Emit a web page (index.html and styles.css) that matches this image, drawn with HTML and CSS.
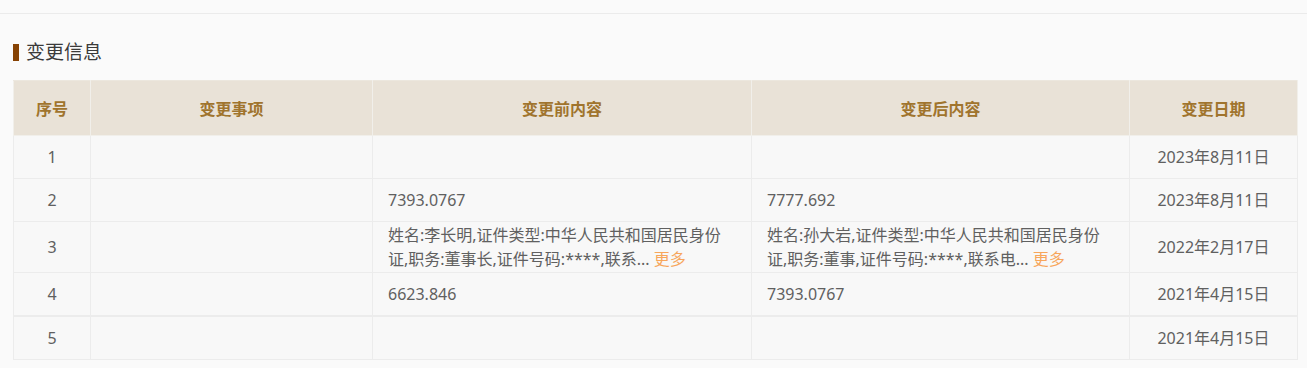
FILE: index.html
```html
<!DOCTYPE html>
<html lang="zh-CN">
<head>
<meta charset="utf-8">
<title>变更信息</title>
<link rel="stylesheet" href="styles.css">
</head>
<body>
<div class="topbar"></div>
<section class="panel">
  <h2 class="title"><span class="mark"></span>变更信息</h2>
  <table class="grid">
    <colgroup>
      <col class="c1"><col class="c2"><col class="c3"><col class="c4"><col class="c5">
    </colgroup>
    <thead>
      <tr><th>序号</th><th>变更事项</th><th>变更前内容</th><th>变更后内容</th><th>变更日期</th></tr>
    </thead>
    <tbody>
      <tr><td class="ctr">1</td><td></td><td></td><td></td><td class="ctr">2023年8月11日</td></tr>
      <tr><td class="ctr">2</td><td></td><td>7393.0767</td><td>7777.692</td><td class="ctr">2023年8月11日</td></tr>
      <tr class="tall"><td class="ctr">3</td><td></td><td>姓名:李长明,证件类型:中华人民共和国居民身份证,职务:董事长,证件号码:****,联系...&nbsp;<a class="more">更多</a></td><td>姓名:孙大岩,证件类型:中华人民共和国居民身份证,职务:董事,证件号码:****,联系电...&nbsp;<a class="more">更多</a></td><td class="ctr">2022年2月17日</td></tr>
      <tr><td class="ctr">4</td><td></td><td>6623.846</td><td>7393.0767</td><td class="ctr">2021年4月15日</td></tr>
      <tr class="sep"><td class="ctr">5</td><td></td><td></td><td></td><td class="ctr">2021年4月15日</td></tr>
    </tbody>
  </table>
</section>
</body>
</html>
```
FILE: styles.css
```css
html, body {
  margin: 0;
  padding: 0;
  background: #fafafa;
  font-family: "Noto Sans", "Noto Sans CJK SC", sans-serif;
}
.topbar {
  height: 13px;
  border-bottom: 1px solid #ebebeb;
}
.panel {
  padding: 26px 10px 0 13px;
}
.title {
  margin: 0 0 16px 0;
  display: flex;
  align-items: center;
  gap: 7px;
  font-size: 19px;
  font-weight: normal;
  color: #3a3a3a;
  height: 24px;
  line-height: 24px;
}
.mark {
  width: 6px;
  height: 17px;
  background: #864203;
}
.grid {
  width: 100%;
  border-collapse: collapse;
  table-layout: fixed;
  font-size: 16px;
}
.c1 { width: 77px; }
.c2 { width: 282px; }
.c3 { width: 379px; }
.c4 { width: 378px; }
.c5 { width: 168px; }
.grid th {
  background: #e9e2d7;
  color: #a0742d;
  font-weight: bold;
  height: 54px;
  border: 1px solid #f1efea;
  border-top: 1px solid #ece7de;
  padding: 0;
  text-align: center;
}
.grid td {
  background: #f8f8f8;
  color: #606060;
  border: 1px solid #ececec;
  height: 38px;
  padding: 2px 15px;
  line-height: 24px;
  vertical-align: middle;
  text-align: left;
}
.grid td.ctr {
  text-align: center;
  padding: 2px 4px;
}
.grid tr.tall td {
  height: 48px;
  padding-top: 1px;
  padding-bottom: 1px;
}
.grid tr.sep td {
  border-top: 2px solid #ececec;
}
.more {
  color: #f7a65b;
  cursor: pointer;
}
```
